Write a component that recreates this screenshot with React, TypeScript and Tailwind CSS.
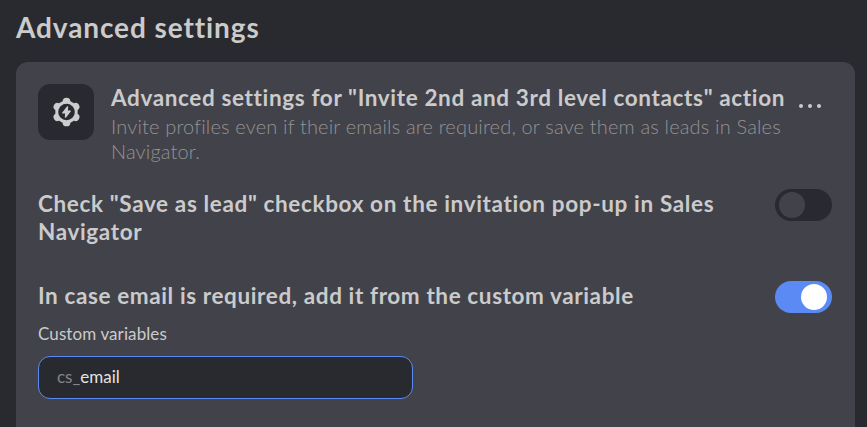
import React, { useState } from "react";

interface ToggleProps {
  checked: boolean;
  onChange: (checked: boolean) => void;
  label: string;
}

function Toggle({ checked, onChange, label }: ToggleProps) {
  return (
    <button
      role="switch"
      aria-checked={checked}
      aria-label={label}
      onClick={() => onChange(!checked)}
      className={`flex h-8 w-[57px] shrink-0 items-center rounded-full transition-colors ${
        checked ? "justify-end bg-[#5b8af5] pr-[5px]" : "justify-start bg-[#292a2f] pl-[4px]"
      }`}
    >
      <span className={`h-[26px] w-[26px] rounded-full ${checked ? "bg-white" : "bg-[#42424a]"}`} />
    </button>
  );
}

function GearBoltIcon() {
  const lobes = [0, 60, 120, 180, 240, 300];

  return (
    <svg width="30" height="30" viewBox="-15.5 -15 30 30">
      <g fill="#cdcdcd">
        <circle r="11.2" />
        {lobes.map((angle) => (
          <circle key={angle} cy="-10.4" r="3.9" transform={`rotate(${angle})`} />
        ))}
      </g>
      <circle r="8.3" fill="#292a2f" />
      <path
        d="M1 -5 L-3.7 .9 H-.6 L-1 5 L3.7 -.9 H.6 Z"
        fill="#cdcdcd"
        stroke="#cdcdcd"
        strokeWidth="1.4"
        strokeLinejoin="round"
      />
    </svg>
  );
}

export default function App() {
  const [saveAsLead, setSaveAsLead] = useState(false);
  const [useVariable, setUseVariable] = useState(true);

  return (
    <div className="h-[427px] w-full overflow-hidden bg-[#292a2f] pl-4 pr-3 font-['Lato',sans-serif] text-[#cbcbcb]">
      <h1 className="flex h-[62px] items-start whitespace-nowrap pt-[9px] text-[28px] leading-[36px] font-bold tracking-[0.9px]">
        Advanced settings
      </h1>

      <div className="h-[380px] rounded-xl bg-[#42424a] px-[22px] pt-[22px]">
        {/* Card header */}
        <div className="flex h-[83px] items-start">
          <div className="flex h-14 w-14 shrink-0 items-center justify-center rounded-xl bg-[#292a2f]">
            <GearBoltIcon />
          </div>
          <div className="ml-[17px] w-[688px] shrink-0 whitespace-nowrap">
            <h2 className="text-[22.5px] leading-[28px] font-bold tracking-[0.64px]">
              Advanced settings for "Invite 2nd and 3rd level contacts" action
            </h2>
            <p className="mt-[2px] text-[20px] leading-[25px] font-light tracking-[0.17px] text-[#939393]">
              Invite profiles even if their emails are required, or save them as leads in Sales
              <br />
              Navigator.
            </p>
          </div>
          <button aria-label="More" className="mt-[20px] flex gap-[5px]">
            <span className="h-1 w-1 rounded-full bg-[#cbcbcb]" />
            <span className="h-1 w-1 rounded-full bg-[#cbcbcb]" />
            <span className="h-1 w-1 rounded-full bg-[#cbcbcb]" />
          </button>
        </div>

        {/* Save as lead */}
        <div className="mt-[22px] flex h-[92px] items-start justify-between pr-px">
          <p className="mt-px whitespace-nowrap text-[22.5px] leading-[28px] font-bold tracking-[0.64px]">
            Check "Save as lead" checkbox on the invitation pop-up in Sales
            <br />
            Navigator
          </p>
          <Toggle checked={saveAsLead} onChange={setSaveAsLead} label="Save as lead" />
        </div>

        {/* Email from a custom variable */}
        <div className="flex h-8 items-start justify-between pr-px">
          <p className="mt-px whitespace-nowrap text-[22.5px] leading-[28px] font-bold tracking-[0.61px]">
            In case email is required, add it from the custom variable
          </p>
          <Toggle checked={useVariable} onChange={setUseVariable} label="Use custom variable" />
        </div>
        <p className="mt-[9px] h-[34px] text-[17px] leading-[24px] tracking-[0.1px]">Custom variables</p>
        <div className="flex h-[43px] w-[375px] items-center rounded-xl border border-[#5b8af5] bg-[#292a2f] pb-[2px] pl-[18px] text-[17px]">
          <span className="text-[#858585]">cs_</span>
          <span className="text-[#e3e3e3]">email</span>
        </div>
      </div>
    </div>
  );
}
